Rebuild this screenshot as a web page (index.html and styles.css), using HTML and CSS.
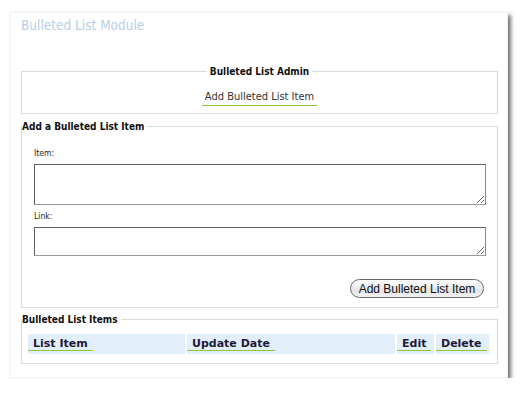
FILE: index.html
```html
<!DOCTYPE html>
<html lang="en">
<head>
    <meta charset="UTF-8">
    <meta name="viewport" content="width=device-width, initial-scale=1.0">
    <title>Bulleted List Module</title>
    <link rel="stylesheet" href="styles.css">
</head>
<body>

    <div class="module">
        <h1 class="module-title">Bulleted List Module</h1>

        <fieldset class="admin-box">
            <legend>Bulleted List Admin</legend>
            <a href="#" class="admin-link">Add Bulleted List Item</a>
        </fieldset>

        <fieldset class="item-form">
            <legend>Add a Bulleted List Item</legend>
            <div class="form-body">
                <label for="item">Item:</label>
                <textarea id="item" class="item-text"></textarea>
                <label for="link">Link:</label>
                <textarea id="link" class="link-text"></textarea>
                <div class="form-actions">
                    <button type="button">Add Bulleted List Item</button>
                </div>
            </div>
        </fieldset>

        <fieldset class="items-box">
            <legend>Bulleted List Items</legend>
            <table class="items-table">
                <tr>
                    <th class="col-item"><span>List Item</span></th>
                    <th class="col-date"><span>Update Date</span></th>
                    <th class="col-edit"><span>Edit</span></th>
                    <th class="col-delete"><span>Delete</span></th>
                </tr>
            </table>
        </fieldset>
    </div>

</body>
</html>
```

FILE: styles.css
```css
* {
    margin: 0;
    padding: 0;
    box-sizing: border-box;
}

body {
    font-family: 'DejaVu Sans', Verdana, sans-serif;
    background: #fff;
    color: #222;
}

.module {
    width: 498px;
    height: 366px;
    margin: 12px 0 0 10px;
    padding: 0 9px 0 10px;
    background: #fff;
    border: 1px solid #f2f2f2;
    box-shadow: 3px 3px 4px rgba(0, 0, 0, 0.55);
}

.module-title {
    font-family: 'DejaVu Sans Condensed', 'DejaVu Sans', sans-serif;
    font-weight: normal;
    font-size: 13.5px;
    color: #b7cfe9;
    padding-top: 4px;
    height: 53px;
}

fieldset {
    border: 1px solid #d4dcdc;
}

legend {
    font-family: 'DejaVu Sans Condensed', 'DejaVu Sans', sans-serif;
    font-weight: bold;
    font-size: 10px;
    color: #111;
    padding: 0 3px 0 0;
}

/* admin box */
.admin-box {
    height: 48px;
    text-align: center;
}

.admin-box legend {
    margin: 0 auto;
    padding: 0 3px;
}

.admin-link {
    display: inline-block;
    margin-top: 13px;
    padding: 0 3px 2px;
    font-family: 'DejaVu Sans Condensed', 'DejaVu Sans', sans-serif;
    font-size: 11px;
    color: #333;
    text-decoration: none;
    border-bottom: 1px solid #8cc63f;
}

/* add item form */
.item-form {
    margin-top: 7px;
    height: 187px;
}

.form-body {
    padding: 16px 11px 0 12px;
}

label {
    display: block;
    font-family: 'DejaVu Sans Condensed', 'DejaVu Sans', sans-serif;
    font-size: 8.5px;
    color: #222;
    margin-bottom: 6px;
}

textarea {
    display: block;
    width: 100%;
    border: 1px solid #5a6464;
    border-bottom-color: #9a9a9a;
    border-right-color: #8a8a8a;
    resize: vertical;
    margin-bottom: 6px;
}

.item-text {
    height: 41px;
}

.link-text {
    height: 29px;
}

.form-actions {
    display: flex;
    justify-content: flex-end;
    padding-top: 17px;
}

button {
    font-family: 'Liberation Sans', Arial, sans-serif;
    font-size: 12px;
    color: #111;
    width: 134px;
    height: 19px;
    border: 1px solid #6a6a6a;
    border-radius: 10px;
    background: linear-gradient(#ffffff, #e4e4e4 60%, #f2f2f2);
    margin-right: 2px;
}

/* items table */
.items-box {
    margin-top: 6px;
    height: 50px;
}

.items-table {
    border-spacing: 2px 0;
    margin: 9px 0 0 4px;
    width: 465px;
}

.items-table th {
    background: #e3eefb;
    height: 20px;
    text-align: left;
    font-size: 11px;
    font-weight: bold;
    color: #1c1c3a;
    vertical-align: bottom;
    padding-bottom: 3px;
}

.items-table th span {
    display: inline-block;
    padding: 0 5px;
    line-height: 13px;
    border-bottom: 1px solid #8cc63f;
}

.col-item { width: 157px; }
.col-date { width: 208px; }
.col-edit { width: 37px; }
.col-delete { width: 53px; }
```
